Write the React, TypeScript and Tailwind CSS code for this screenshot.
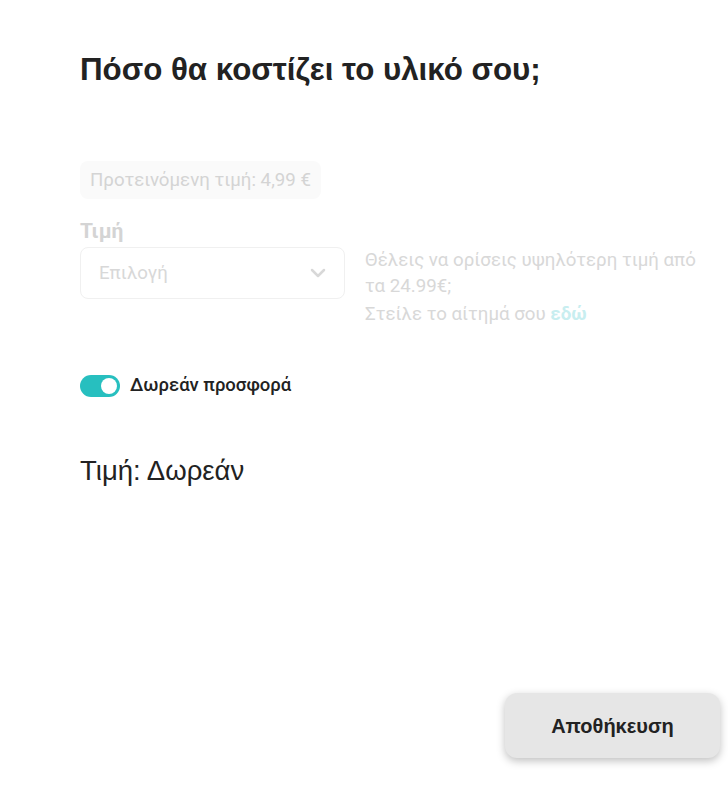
import { ChevronDown } from 'lucide-react';

export default function App() {
    return (
        <div className="relative h-[802px] w-[728px] overflow-hidden bg-white font-['Roboto',sans-serif] text-[#222]">
            <div className="px-20 pt-[51px]">
                <h1 className="font-['Liberation_Sans',Arial,sans-serif] text-[31.3px] leading-[38px] font-bold text-[#222]">
                    Πόσο θα κοστίζει το υλικό σου;
                </h1>

                {/* Suggested price */}
                <div className="mt-[72px] inline-flex h-[38px] items-center rounded-lg bg-[#fafafa] px-[10px] text-[18.7px] text-[#d4d4d4]">
                    Προτεινόμενη τιμή: 4,99 €
                </div>

                {/* Price select + note */}
                <div className="mt-[20px]">
                    <div className="text-[21px] leading-6 font-bold text-[#d4d4d4]">
                        Τιμή
                    </div>
                    <div className="mt-[4px] flex items-start gap-5">
                        <div className="flex h-[52px] w-[265px] shrink-0 items-center justify-between rounded-lg border border-[#f0f0f0] pr-[14px] pl-[18px] text-[18.7px] text-[#d8d8d8]">
                            <span>Επιλογή</span>
                            <ChevronDown className="h-6 w-6 text-[#d8d8d8]" strokeWidth={2.5} />
                        </div>
                        <div className="text-[18.7px] leading-[26px] whitespace-nowrap text-[#d8d8d8]">
                            <p>
                                Θέλεις να ορίσεις υψηλότερη τιμή από
                                <br />
                                τα 24.99€;
                            </p>
                            <p className="mt-[2px]">
                                Στείλε το αίτημά σου{' '}
                                <span className="font-bold text-[#c8eef0]">εδώ</span>
                            </p>
                        </div>
                    </div>
                </div>

                {/* Toggle */}
                <div className="mt-[45px] flex items-center gap-[10px]">
                    <div className="flex h-[22px] w-10 items-center justify-end rounded-full bg-[#27bfbf] px-[3px]">
                        <div className="h-4 w-4 rounded-full bg-white" />
                    </div>
                    <span className="text-[18.5px] font-medium text-[#222]">
                        Δωρεάν προσφορά
                    </span>
                </div>

                <div className="mt-[50px] font-['Liberation_Sans',Arial,sans-serif] text-[27.5px] text-[#222]">
                    Τιμή: Δωρεάν
                </div>
            </div>

            <div className="absolute right-[8px] bottom-[44px]">
                <button className="h-[65px] w-[215px] rounded-xl bg-[#e6e6e6] font-['Liberation_Sans',Arial,sans-serif] text-xl font-bold text-[#222] shadow-[0_3px_8px_rgba(0,0,0,0.25)]">
                    Αποθήκευση
                </button>
            </div>
        </div>
    );
}
